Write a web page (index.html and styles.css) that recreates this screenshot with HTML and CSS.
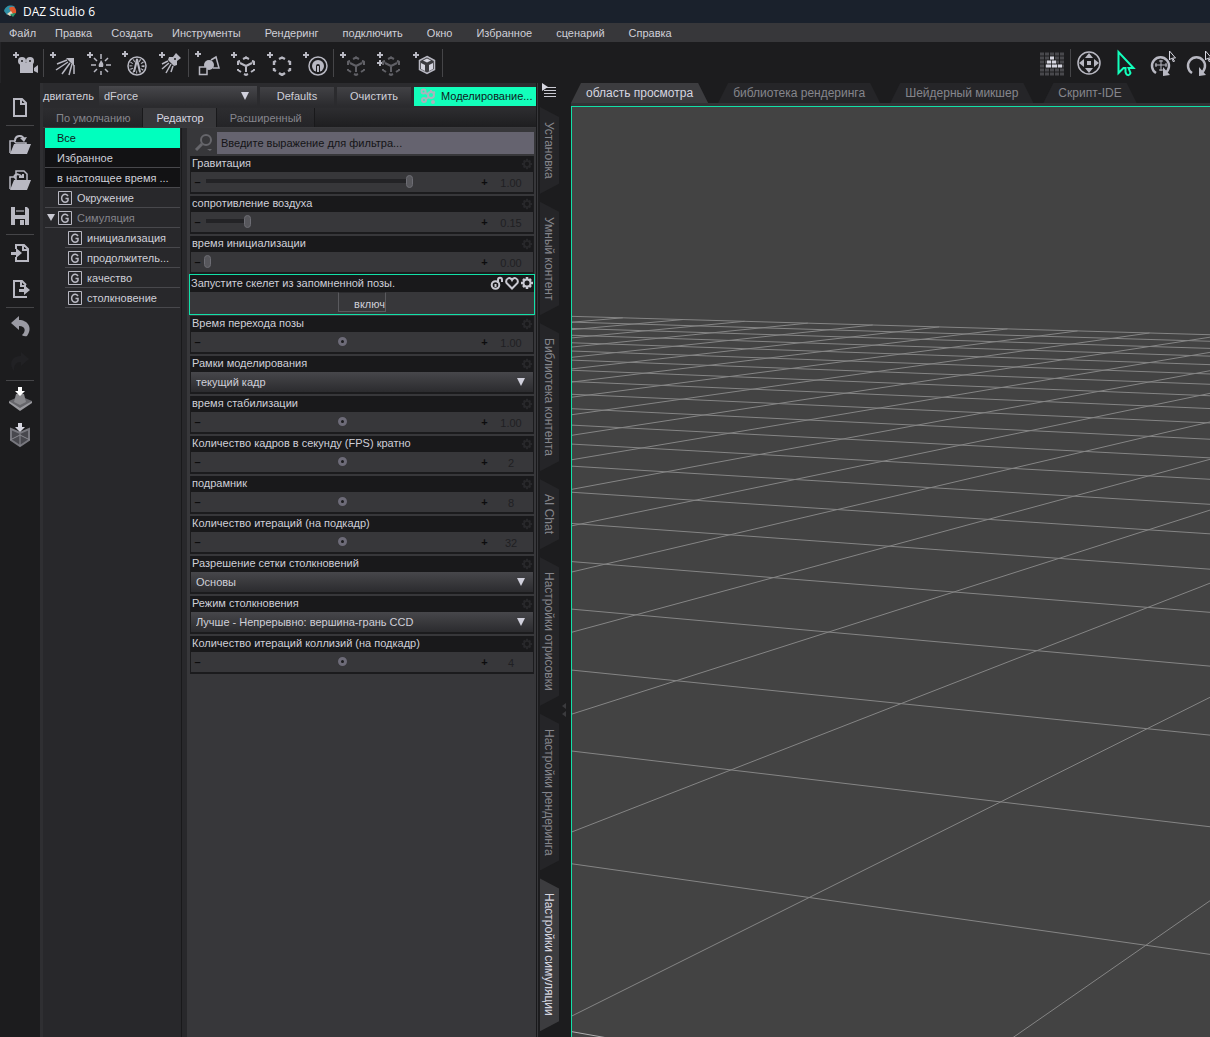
FILE: index.html
```html
<!DOCTYPE html>
<html lang="ru">
  <head>
    <meta charset="UTF-8" />
    <meta name="viewport" content="width=device-width, initial-scale=1.0" />
    <title>DAZ Studio 6</title>
    <link rel="stylesheet" href="styles.css">
  </head>
  <body>
    <!-- shared icon parts -->
    <svg class="sprite" aria-hidden="true">
      <symbol id="plus" viewBox="0 0 8 8"><path d="M3 1h2v2h2v2H5v2H3V5H1V3h2z" fill="currentColor" /></symbol>
      <symbol id="cube" viewBox="0 0 20 20">
        <g fill="none" stroke="currentColor" stroke-width="2">
          <path d="M7 3l3-1.500 3 1.500M2 9V6l2-1M16 5l2 1v3M2 13v1l3 2M18 13v1l-3 2M8 18l2 1 2-1M10 10v6M10 10L4 7M10 10l6-3" />
        </g>
        <path d="M10 0l3 3H7zM1 5l3-1-1 4zM19 5l-3-1 1 4z" fill="currentColor" />
      </symbol>
      <symbol id="dots" viewBox="0 0 20 20">
        <path d="M7 3l3-1.500 3 1.500M2 9V6l2-1M16 5l2 1v3M2 12v2l2 1M18 12v2l-2 1M7 17l3 2 3-2" fill="none" stroke="currentColor" stroke-width="2.400" />
      </symbol>
      <symbol id="gear" viewBox="0 0 14 14">
        <path d="M7 1v12M1 7h12M3 3l8 8M11 3l-8 8" stroke="currentColor" stroke-width="2.500" />
        <circle cx="7" cy="7" r="3.500" fill="#19191b" stroke="currentColor" stroke-width="2" />
      </symbol>
      <symbol id="group" viewBox="0 0 14 14">
        <path d="M.5.5h13v13H.5z" fill="none" stroke="currentColor" />
        <path d="M10 5A3.500 4 0 1 0 10 9.500V7.500H7.500" fill="none" stroke="currentColor" stroke-width="1.500" />
      </symbol>
    </svg>

    <header class="titlebar">
      <svg width="14" height="14" viewBox="0 0 14 14">
        <path d="M1 6C2 1 8-1 12 2l-3 4-5 4z" fill="#2f8fa6" />
        <path d="M6 3c4-3 8 0 7 5l-4 1z" fill="#e2582d" />
        <path d="M4 9l4-3 2 3-3 2z" fill="#e8d9c0" />
        <path d="M7 9l6-1-3 4z" fill="#2a9b6e" />
      </svg>
      <h1>DAZ Studio 6</h1>
    </header>

    <nav class="menubar">
      <a href="#">Файл</a>
      <a href="#">Правка</a>
      <a href="#">Создать</a>
      <a href="#">Инструменты</a>
      <a href="#">Рендеринг</a>
      <a href="#">подключить</a>
      <a href="#">Окно</a>
      <a href="#">Избранное</a>
      <a href="#">сценарий</a>
      <a href="#">Справка</a>
    </nav>

    <div class="toolbar">
      <button class="tool" aria-label="Новая камера">
        <svg viewBox="0 0 36 36">
          <use href="#plus" x="5" y="6" width="8" height="8" />
          <circle cx="15" cy="16" r="4" fill="currentColor" /><circle cx="23" cy="16" r="4" fill="currentColor" />
          <path d="M13 18h13v10H13zM27 23l4-3v8l-4-2z" fill="currentColor" />
          <circle cx="15" cy="16" r="1" fill="#1c1c1e" /><circle cx="23" cy="16" r="1" fill="#1c1c1e" />
        </svg>
      </button>
      <span class="sep"></span>
      <button class="tool" aria-label="Направленный свет">
        <svg viewBox="0 0 36 36">
          <use href="#plus" x="5" y="6" width="8" height="8" />
          <path d="M22 13h8v8z" fill="currentColor" />
          <path d="M23 15l-10 4M24 17l-12 8M26 18l-8 11M28 19l-3 11M30 20v9" stroke="currentColor" stroke-width="1.500" />
        </svg>
      </button>
      <button class="tool" aria-label="Точечный свет">
        <svg viewBox="0 0 36 36">
          <use href="#plus" x="6" y="6" width="8" height="8" />
          <path d="M21 9v5M21 26v4M11 20h5M26 20h5M14 13l3 3M28 13l-3 3M14 27l3-3M28 27l-3-3" stroke="currentColor" stroke-width="1.500" />
          <path d="M21 15c2 3 3 4 2 7h-4c-1-3 1-4 2-7z" fill="currentColor" />
        </svg>
      </button>
      <button class="tool" aria-label="Линейный свет">
        <svg viewBox="0 0 36 36">
          <use href="#plus" x="5" y="5" width="8" height="8" />
          <circle cx="21" cy="21" r="9" fill="none" stroke="currentColor" stroke-width="1.500" />
          <circle cx="21" cy="21" r="6" fill="none" stroke="currentColor" stroke-width="3" stroke-dasharray="1 2" />
          <path d="M20 14h2l3 13h-2l-2-8-2 8h-2zM19 22h4" fill="currentColor" />
        </svg>
      </button>
      <button class="tool" aria-label="Прожектор">
        <svg viewBox="0 0 36 36">
          <use href="#plus" x="6" y="6" width="8" height="8" />
          <path d="M24 8l5 5-4 3v4l-3 1-6-6 1-3h4z" fill="currentColor" /><circle cx="23" cy="14" r="1" fill="#1c1c1e" />
          <path d="M16 16l-6 3M17 18l-7 6M19 19l-5 9M21 21l-2 6" stroke="currentColor" stroke-width="1.500" />
        </svg>
      </button>
      <span class="sep"></span>
      <button class="tool" aria-label="Примитив">
        <svg viewBox="0 0 36 36">
          <use href="#plus" x="5" y="5" width="8" height="8" />
          <path d="M22 15l5-3 3 11h-6" fill="none" stroke="currentColor" stroke-width="1.500" />
          <circle cx="20" cy="20" r="5" fill="currentColor" />
          <path d="M10.500 22h7.500v7.500h-7.500z" fill="#1c1c1e" stroke="currentColor" stroke-width="1.500" />
        </svg>
      </button>
      <button class="tool" aria-label="Нулевой узел">
        <svg viewBox="0 0 36 36"><use href="#plus" x="5" y="6" width="8" height="8" /><use href="#cube" x="11" y="11" width="20" height="20" /></svg>
      </button>
      <button class="tool" aria-label="Группа">
        <svg viewBox="0 0 36 36"><use href="#plus" x="5" y="6" width="8" height="8" /><use href="#dots" x="11" y="11" width="20" height="20" /></svg>
      </button>
      <button class="tool" aria-label="Экземпляр">
        <svg viewBox="0 0 36 36">
          <use href="#plus" x="5" y="6" width="8" height="8" />
          <circle cx="21" cy="21" r="9" fill="none" stroke="currentColor" stroke-width="1.500" />
          <circle cx="21" cy="21" r="6" fill="currentColor" />
          <path d="M19 27v-6a2 2 0 1 1 4 0v6z" fill="#1c1c1e" /><path d="M20 21h2v6h-2z" fill="currentColor" />
        </svg>
      </button>
      <span class="sep"></span>
      <button class="tool" aria-label="Новый узел">
        <svg viewBox="0 0 36 36"><use href="#plus" x="5" y="6" width="8" height="8" /><use class="dim" href="#cube" x="12" y="11" width="20" height="20" /></svg>
      </button>
      <button class="tool" aria-label="Новые узлы">
        <svg viewBox="0 0 36 36"><use href="#plus" x="6" y="6" width="8" height="8" /><use href="#plus" x="6" y="14" width="8" height="8" /><use class="dim" href="#cube" x="11" y="11" width="20" height="20" /></svg>
      </button>
      <button class="tool" aria-label="Геометрия">
        <svg viewBox="0 0 36 36">
          <use href="#plus" x="6" y="6" width="8" height="8" />
          <path d="M21 11.500l7.500 4v9l-7.500 4-7.500-4v-9z" fill="#3c3c40" stroke="currentColor" stroke-width="1.500" />
          <path d="M17 15.500l4-2 4 2-4 2zM15 18l4 2v6l-4-2zM27 18l-4 2v6l4-2z" fill="#d6d6e0" />
        </svg>
      </button>
      <span class="sep"></span>

      <div class="view-tools">
        <button class="tool" aria-label="Стиль отображения">
          <svg viewBox="0 0 36 36">
            <path d="M6 9h24M6 13h24M6 17h24M6 21h24M6 25h24M6 29h24" stroke="#48484c" stroke-width="3" stroke-dasharray="4 1" />
            <path d="M16 13h4M13 17h4M18 17h4M12 21h5M18 21h5M24 21h4" stroke="#d6d6e0" stroke-width="3" />
          </svg>
        </button>
        <span class="sep"></span>
        <button class="tool" aria-label="Универсальный инструмент">
          <svg viewBox="0 0 36 36">
            <circle cx="18" cy="18" r="11" fill="none" stroke="currentColor" stroke-width="1.500" />
            <path d="M18 8l4 5h-8zM18 28l4-5h-8zM8 18l5-4v8zM28 18l-5-4v8zM16 16h4v4h-4z" fill="currentColor" />
          </svg>
        </button>
        <button class="tool active" aria-label="Выбор узла">
          <svg viewBox="0 0 36 36">
            <path d="M11.500 7v21l5-5h2v4c1 4 4 4 5 1l-2-5h5z" fill="none" stroke="currentColor" stroke-width="2" />
          </svg>
        </button>
        <button class="tool" aria-label="Вращение и перемещение">
          <svg viewBox="0 0 36 36">
            <path d="M13 28a8.500 8.500 0 1 1 9 0" fill="none" stroke="currentColor" stroke-width="2.500" />
            <path d="M20 22v9l7-1z" fill="currentColor" />
            <path d="M18 15v11M12 20h12M16 16h4M16 25h4M13 18v4M23 18v4" stroke="currentColor" />
            <path d="M26.500 6v9l2-2 2 4 1-1-2-3h3z" fill="#1c1c1e" stroke="#d6d6e0" />
          </svg>
        </button>
        <button class="tool" aria-label="Вращение">
          <svg viewBox="0 0 36 36">
            <path d="M13 28a8.500 8.500 0 1 1 9 0" fill="none" stroke="currentColor" stroke-width="2.500" />
            <path d="M20 22v9l7-1z" fill="currentColor" />
            <path d="M26.500 6v9l2-2 2 4 1-1-2-3h3z" fill="#1c1c1e" stroke="#d6d6e0" />
          </svg>
        </button>
      </div>
    </div>

    <main class="workspace">
      <div class="file-tools">
        <button class="tool" aria-label="Новый">
          <svg viewBox="0 0 36 36"><path d="M12 10h8l4 4v13H12zM19 10v5h5" fill="none" stroke="currentColor" stroke-width="2" /></svg>
        </button>
        <span class="rule"></span>
        <button class="tool" aria-label="Открыть">
          <svg viewBox="0 0 36 36">
            <path d="M8 27V15h4l2 2h10v4" fill="none" stroke="currentColor" stroke-width="1.500" />
            <path d="M12 18h17l-4 10H8z" fill="currentColor" /><path d="M13 15c0-6 8-7 9-1" fill="none" stroke="currentColor" stroke-width="2" /><path d="M18 12l7-1-3 5z" fill="currentColor" />
          </svg>
        </button>
        <button class="tool" aria-label="Объединить">
          <svg viewBox="0 0 36 36">
            <path d="M8 27V15h4l2 2M14 20V9h8l3 3v8" fill="none" stroke="currentColor" stroke-width="1.500" />
            <path d="M12 18h17l-4 10H8z" fill="currentColor" /><path d="M12 15c2-4 6-3 8 0M17 15h4v-3" fill="none" stroke="currentColor" stroke-width="2" />
          </svg>
        </button>
        <button class="tool" aria-label="Сохранить">
          <svg viewBox="0 0 36 36"><path d="M9 9h16l2 2v16H9z" fill="currentColor" /><path d="M13 9h10v8H13zM13 21h10v6H13z" fill="#1c1c1e" /><path d="M14 13h8" stroke="#77777e" stroke-width="2" /><path d="M18 22h4v5h-4z" fill="currentColor" /></svg>
        </button>
        <span class="rule"></span>
        <button class="tool" aria-label="Импорт">
          <svg viewBox="0 0 36 36"><path d="M14 14v-4h8l4 4v12H14v-4M21 10v5h5" fill="none" stroke="currentColor" stroke-width="2" /><path d="M9 17h5v-4l6 5-6 5v-3H9z" fill="currentColor" /></svg>
        </button>
        <button class="tool" aria-label="Экспорт">
          <svg viewBox="0 0 36 36"><path d="M24 14l-4-4h-8v16h12v-1M19 10v5h5" fill="none" stroke="currentColor" stroke-width="2" /><path d="M17 18h5v-4l6 5-6 5v-3h-5z" fill="currentColor" /></svg>
        </button>
        <span class="rule"></span>
        <button class="tool" aria-label="Отменить">
          <svg viewBox="0 0 36 36"><path d="M9 15l8-7v4c9 0 14 8 8 16-3 1-5-1-5-1 4-3 4-9-3-9v4z" fill="#9a9aa3" /></svg>
        </button>
        <button class="tool" aria-label="Повторить" disabled>
          <svg viewBox="0 0 36 36"><path d="M27 15l-8-7v4c-9 0-13 7-7 15 0-6 2-9 7-9v4z" fill="#212124" /></svg>
        </button>
        <span class="rule"></span>
        <button class="tool" aria-label="На пол">
          <svg viewBox="0 0 36 36"><path d="M7 20l11-5 12 5-12 9z" fill="#66666b" /><path d="M7 20l11 7 12-7v2l-12 8-11-8z" fill="#99999e" /><path d="M14 13h8l2 8-6 3-6-3z" fill="#88888c" /><path d="M16 6h4v4h3l-5 5-5-5h3z" fill="#fff" /></svg>
        </button>
        <button class="tool" aria-label="В сцену">
          <svg viewBox="0 0 36 36"><path d="M9 12l9 4 9-4v11l-9 6-9-6z" fill="#48484e" stroke="#77777e" stroke-width="2" /><path d="M18 17v12M8 23l10-5 10 5" stroke="#88888f" fill="none" /><path d="M16 6h4v4h3l-5 5-5-5h3z" fill="#d6d6e0" /></svg>
        </button>
      </div>

      <section class="panel">
        <div class="engine-row">
          <label for="engine">двигатель</label>
          <div class="dropdown engine">
            <select id="engine"><option>dForce</option></select>
          </div>
          <button class="defaults">Defaults</button>
          <button class="clear">Очистить</button>
          <button class="simulate">
            <svg width="16" height="16" viewBox="0 0 16 16" fill="none" stroke="#a9b4bc" stroke-width="2">
              <circle cx="3.500" cy="3.500" r="2" /><circle cx="11" cy="7" r="3" /><circle cx="4" cy="12" r="2" /><circle cx="13" cy="14" r="1" />
              <path d="M5 5l3 1M6 11l3-2M11 2v2M15 4l-2 1" />
            </svg>
            Моделирование...
          </button>
        </div>

        <div class="mode-tabs">
          <button>По умолчанию</button>
          <button class="active">Редактор</button>
          <button>Расширенный</button>
        </div>

        <div class="panel-body">
          <ul class="tree">
            <li class="flat selected"><button>Все</button></li>
            <li class="flat"><button>Избранное</button></li>
            <li class="flat"><button>в настоящее время ...</button></li>
            <li><button><svg><use href="#group" /></svg>Окружение</button></li>
            <li class="open"><button><svg><use href="#group" /></svg>Симуляция</button></li>
            <li class="child"><button><svg><use href="#group" /></svg>инициализация</button></li>
            <li class="child"><button><svg><use href="#group" /></svg>продолжитель...</button></li>
            <li class="child"><button><svg><use href="#group" /></svg>качество</button></li>
            <li class="child"><button><svg><use href="#group" /></svg>столкновение</button></li>
          </ul>

          <div class="properties">
            <div class="filter">
              <svg width="20" height="20" viewBox="0 0 20 20" fill="none" stroke="#66666b">
                <circle cx="12" cy="7" r="5" stroke-width="2" /><path d="M8 11l-6 6" stroke-width="3" /><path d="M13 16h5l-2 2z" fill="#66666b" stroke="none" />
              </svg>
              <input type="text" aria-label="Фильтр" placeholder="Введите выражение для фильтра..." />
            </div>

            <div class="property">
              <div class="head"><label for="gravity">Гравитация</label><svg class="cog"><use href="#gear" /></svg></div>
              <div class="slider">
                <button aria-label="Меньше">–</button>
                <input type="range" id="gravity" value="75" style="--fill: 75%" />
                <button aria-label="Больше">+</button>
                <input type="text" class="value" aria-label="Гравитация" value="1.00" />
              </div>
            </div>

            <div class="property">
              <div class="head"><label for="air">сопротивление воздуха</label><svg class="cog"><use href="#gear" /></svg></div>
              <div class="slider">
                <button aria-label="Меньше">–</button>
                <input type="range" id="air" value="15" style="--fill: 15%" />
                <button aria-label="Больше">+</button>
                <input type="text" class="value" aria-label="сопротивление воздуха" value="0.15" />
              </div>
            </div>

            <div class="property">
              <div class="head"><label for="start">время инициализации</label><svg class="cog"><use href="#gear" /></svg></div>
              <div class="slider">
                <button aria-label="Меньше">–</button>
                <input type="range" id="start" value="0" style="--fill: 0%" />
                <button aria-label="Больше">+</button>
                <input type="text" class="value" aria-label="время инициализации" value="0.00" />
              </div>
            </div>

            <div class="property current">
              <div class="head">
                <label for="pose">Запустите скелет из запомненной позы.</label>
                <svg class="state" viewBox="0 0 14 14" fill="none" stroke="currentColor" stroke-width="2"><circle cx="5.500" cy="9" r="3.800" /><path d="M8 7V4c0-3 4-3 4 0v2M5.500 8v3" /></svg>
                <svg class="state" viewBox="0 0 14 14" fill="none" stroke="currentColor" stroke-width="2"><path d="M7 12.500L1.500 7C0 3 5 0 7 4c2-4 7-1 5.500 3z" /></svg>
                <svg class="state"><use href="#gear" /></svg>
              </div>
              <div class="toggle"><button id="pose">включ</button></div>
            </div>

            <div class="property">
              <div class="head"><label for="transition">Время перехода позы</label><svg class="cog"><use href="#gear" /></svg></div>
              <div class="slider free">
                <button aria-label="Меньше">–</button>
                <input type="range" id="transition" value="50" />
                <button aria-label="Больше">+</button>
                <input type="text" class="value" aria-label="Время перехода позы" value="1.00" />
              </div>
            </div>

            <div class="property">
              <div class="head"><label for="frames">Рамки моделирования</label><svg class="cog"><use href="#gear" /></svg></div>
              <div class="dropdown"><select id="frames"><option>текущий кадр</option></select></div>
            </div>

            <div class="property">
              <div class="head"><label for="stabilize">время стабилизации</label><svg class="cog"><use href="#gear" /></svg></div>
              <div class="slider free">
                <button aria-label="Меньше">–</button>
                <input type="range" id="stabilize" value="50" />
                <button aria-label="Больше">+</button>
                <input type="text" class="value" aria-label="время стабилизации" value="1.00" />
              </div>
            </div>

            <div class="property">
              <div class="head"><label for="fps">Количество кадров в секунду (FPS) кратно</label><svg class="cog"><use href="#gear" /></svg></div>
              <div class="slider free">
                <button aria-label="Меньше">–</button>
                <input type="range" id="fps" value="50" />
                <button aria-label="Больше">+</button>
                <input type="text" class="value" aria-label="Количество кадров" value="2" />
              </div>
            </div>

            <div class="property">
              <div class="head"><label for="subframes">подрамник</label><svg class="cog"><use href="#gear" /></svg></div>
              <div class="slider free">
                <button aria-label="Меньше">–</button>
                <input type="range" id="subframes" value="50" />
                <button aria-label="Больше">+</button>
                <input type="text" class="value" aria-label="подрамник" value="8" />
              </div>
            </div>

            <div class="property">
              <div class="head"><label for="iterations">Количество итераций (на подкадр)</label><svg class="cog"><use href="#gear" /></svg></div>
              <div class="slider free">
                <button aria-label="Меньше">–</button>
                <input type="range" id="iterations" value="50" />
                <button aria-label="Больше">+</button>
                <input type="text" class="value" aria-label="Количество итераций" value="32" />
              </div>
            </div>

            <div class="property">
              <div class="head"><label for="mesh">Разрешение сетки столкновений</label><svg class="cog"><use href="#gear" /></svg></div>
              <div class="dropdown"><select id="mesh"><option>Основы</option></select></div>
            </div>

            <div class="property">
              <div class="head"><label for="mode">Режим столкновения</label><svg class="cog"><use href="#gear" /></svg></div>
              <div class="dropdown"><select id="mode"><option>Лучше - Непрерывно: вершина-грань CCD</option></select></div>
            </div>

            <div class="property">
              <div class="head"><label for="collisions">Количество итераций коллизий (на подкадр)</label><svg class="cog"><use href="#gear" /></svg></div>
              <div class="slider free">
                <button aria-label="Меньше">–</button>
                <input type="range" id="collisions" value="50" />
                <button aria-label="Больше">+</button>
                <input type="text" class="value" aria-label="Количество итераций коллизий" value="4" />
              </div>
            </div>
          </div>
        </div>
      </section>

      <nav class="side-tabs">
        <button class="pane-menu" aria-label="Меню панели">
          <svg width="16" height="16" viewBox="0 0 16 16"><path d="M3 4.500h12M3 7.500h12M3 10.500h12M3 13.500h12" stroke="#c9c9d2" /><path d="M1 0l6 4-6 4z" fill="#d6d6e0" /></svg>
        </button>
        <button class="tab">Установка</button>
        <button class="tab">Умный контент</button>
        <button class="tab">Библиотека контента</button>
        <button class="tab">AI Chat</button>
        <button class="tab">Настройки отрисовки</button>
        <button class="tab">Настройки рендеринга</button>
        <button class="tab active">Настройки симуляции</button>
      </nav>

      <div class="splitter"><svg width="6" height="16" viewBox="0 0 6 16"><path d="M5 1v6L1 4zM5 9v6l-4-3z" fill="#3a3a3d" /></svg></div>

      <section class="stage">
        <div class="stage-tabs">
          <button class="tab active">область просмотра</button>
          <button class="tab">библиотека рендеринга</button>
          <button class="tab">Шейдерный микшер</button>
          <button class="tab">Скрипт-IDE</button>
        </div>
        <div class="viewport">
          <svg id="floor"></svg>
        </div>
      </section>
    </main>

    <script src="script.js"></script>
  </body>
</html>
```

FILE: styles.css
```css
* {
  box-sizing: border-box;
}

body {
  display: flex;
  flex-direction: column;
  height: 100vh;
  margin: 0;
  overflow: hidden;
  background: #1c1c1e;
  color: #cfcfd8;
  font: 11px/16px "Liberation Sans", Arial, sans-serif;
}

button,
input,
select {
  margin: 0;
  padding: 0;
  border: 0;
  border-radius: 0;
  background: none;
  color: inherit;
  font: inherit;
}

.sprite {
  display: none;
}

/* window title and menu */
.titlebar {
  display: flex;
  align-items: center;
  gap: 6px;
  height: 23px;
  padding-left: 3px;
  background: #1a212c;
}

.titlebar h1 {
  margin: 0;
  color: #fff;
  font: 12px/20px "Open Sans", sans-serif;
}

.menubar {
  display: flex;
  gap: 19px;
  height: 19px;
  padding-left: 9px;
  background: #37373a;
  line-height: 20px;
}

.menubar a {
  color: inherit;
  text-decoration: none;
  white-space: nowrap;
}

.menubar a:nth-child(n + 5) {
  margin-left: 5px;
}

/* toolbars */
.toolbar {
  display: flex;
  align-items: center;
  height: 41px;
  padding-left: 6px;
  border-left: 1px solid #242427;
}

.tool {
  flex: none;
  width: 36px;
  height: 36px;
  color: #b8b8c2;
}

.tool svg {
  display: block;
  width: 36px;
  height: 36px;
}

.tool.active {
  color: #12ffbb;
}

.dim {
  color: #606066;
}

.sep {
  width: 1px;
  height: 28px;
  background: #454548;
}

.view-tools {
  display: flex;
  align-items: center;
  margin-left: auto;
  margin-right: -5px;
}

.workspace {
  display: flex;
  flex: 1;
  min-height: 0;
}

.file-tools {
  display: flex;
  flex-direction: column;
  align-items: center;
  width: 43px;
  padding: 6px 1px 0 0;
  border-right: 3px solid #2f2f32;
}

.rule {
  flex: none;
  width: 28px;
  height: 1px;
  background: #454548;
}

/* simulation settings */
.panel {
  display: flex;
  flex-direction: column;
  width: 494px;
  border-right: 1px solid #19191b;
  background: #28282b;
}

.engine-row {
  display: flex;
  align-items: center;
  gap: 3px;
  height: 25px;
  padding-top: 1px;
  background: #2b2b2e;
}

.engine-row label {
  width: 53px;
}

.engine-row button {
  height: 19px;
  background: linear-gradient(#414145, #2b2b2e);
}

.dropdown {
  position: relative;
  background: linear-gradient(#47474b, #2b2b2e);
}

.dropdown::after {
  content: "";
  position: absolute;
  top: 6px;
  right: 8px;
  width: 8px;
  height: 8px;
  background: #d0d0dc;
  clip-path: polygon(0 0, 100% 0, 50% 100%);
  pointer-events: none;
}

.dropdown select {
  display: block;
  width: 100%;
  height: 20px;
  padding-left: 5px;
  appearance: none;
}

.dropdown option {
  background: #2b2b2e;
}

.engine {
  flex: 1;
}

.defaults,
.clear {
  width: 74px;
}

.engine-row .simulate {
  display: flex;
  align-items: center;
  gap: 5px;
  width: 122px;
  padding-left: 6px;
  background: #12ffbb;
  color: #10201c;
  white-space: nowrap;
}

.mode-tabs {
  display: flex;
  height: 19px;
  background: linear-gradient(#2d2d30, #1e1e20);
}

.mode-tabs button {
  padding: 0 12px 0 13px;
  border-right: 1px solid #19191b;
  background: linear-gradient(#2d2d30, #242427);
  color: #85858c;
}

.mode-tabs .active {
  background: #38383b;
  color: #d6d6e0;
}

.panel-body {
  display: flex;
  flex: 1;
  min-height: 0;
  border-top: 1px solid #3a3a3d;
}

.tree {
  width: 139px;
  margin: 0;
  padding: 0 1px 0 2px;
  border-right: 1px solid #19191b;
  list-style: none;
}

.tree li {
  height: 20px;
  border-bottom: 1px solid #48484c;
}

.tree button {
  display: flex;
  align-items: center;
  gap: 5px;
  width: 100%;
  height: 19px;
  padding-left: 13px;
  text-align: left;
  white-space: nowrap;
}

.tree svg {
  width: 14px;
  height: 14px;
  color: #b8b8c2;
}

.tree .flat {
  background: #121214;
}

.tree .flat button {
  padding-left: 12px;
}

.tree .selected {
  border-color: #00ffbe;
  background: #00ffbe;
  color: #10201c;
}

.tree .open button {
  padding-left: 2px;
  color: #85858c;
}

.tree .open button::before {
  content: "";
  width: 8px;
  height: 7px;
  margin-right: -2px;
  background: #c9c9d2;
  clip-path: polygon(0 0, 100% 0, 50% 100%);
}

.tree .child {
  margin-left: 20px;
}

.tree .child button {
  padding-left: 3px;
}

.properties {
  flex: 1;
  margin-left: 5px;
  padding: 2px 2px 0 3px;
  background: #37373a;
}

.filter {
  display: flex;
  align-items: center;
  height: 25px;
  margin-bottom: 1px;
}

.filter svg {
  margin: 0 3px 0 4px;
}

.filter input {
  flex: 1;
  height: 22px;
  padding-left: 4px;
  background: #65636f;
  color: #141416;
}

.filter input::placeholder {
  color: #141416;
  opacity: 1;
}

.property {
  height: 38px;
  margin-bottom: 2px;
  border: 1px solid #1b1b1d;
  border-bottom-width: 2px;
  border-top: 0;
  background: #37373a;
}

.head {
  display: flex;
  height: 16px;
  padding-left: 1px;
  background: #19191b;
  line-height: 14px;
}

.head label {
  flex: 1;
}

.cog {
  width: 12px;
  height: 12px;
  margin-top: 2px;
  color: #28282b;
}

.state {
  width: 14px;
  height: 14px;
  margin: 1px 0 0 1px;
  color: #c9c9d2;
}

.property.current {
  height: 41px;
  margin: -2px -1px 1px;
  border: 1px solid #12e0a8;
}

.current .head {
  height: 17px;
  line-height: 16px;
}

.slider {
  display: flex;
  align-items: center;
  height: 20px;
}

.slider button {
  width: 9px;
  height: 20px;
  color: #0c0c0d;
  font-weight: bold;
  line-height: 16px;
}

.slider button:first-child {
  width: 13px;
}

.slider input[type="range"] {
  flex: 1;
  min-width: 0;
  height: 18px;
  margin-bottom: 2px;
  background: linear-gradient(#232326, #232326) 2px 50% / var(--fill, 0) 4px no-repeat;
  appearance: none;
}

.slider input::-webkit-slider-thumb {
  width: 7px;
  height: 13px;
  border: 1px solid #6d6d74;
  border-radius: 4px;
  background: #57575c;
  appearance: none;
}

.free input::-webkit-slider-thumb {
  width: 9px;
  height: 9px;
  border: 3px solid #6d6b78;
  border-radius: 50%;
  background: #1c1c1e;
}

.slider .value {
  width: 44px;
  padding-top: 2px;
  color: #202023;
  text-align: center;
}

.toggle {
  display: flex;
  justify-content: center;
}

.toggle button {
  height: 20px;
  padding: 4px 0 0 15px;
  border: 1px solid #5a5a5e;
  border-top-color: #2b2b2e;
  line-height: 14px;
}

/* vertical pane tabs */
.side-tabs {
  display: flex;
  flex-direction: column;
  gap: 8px;
  width: 24px;
  padding-left: 2px;
  border-left: 1px solid #37373a;
}

.pane-menu {
  width: 18px;
  height: 16px;
}

.tab {
  flex: none;
  background: #252528;
  color: #85858c;
  font-size: 12px;
  white-space: nowrap;
}

.tab.active {
  background: #3c3c3f;
  color: #d6d6e0;
}

.side-tabs .tab {
  width: 19px;
  padding: 15px 2px 15px 0;
  clip-path: polygon(0 0, 100% 10px, 100% calc(100% - 10px), 0 100%);
  writing-mode: vertical-rl;
}

.splitter {
  display: flex;
  align-items: center;
  width: 10px;
  padding-top: 300px;
}

.stage {
  display: flex;
  flex: 1;
  flex-direction: column;
  min-width: 0;
}

.stage-tabs {
  display: flex;
  gap: 10px;
  height: 23px;
  border-bottom: 3px solid #323235;
}

.stage-tabs .tab {
  padding: 0 15px;
  clip-path: polygon(10px 0, calc(100% - 10px) 0, 100% 100%, 0 100%);
}

.viewport {
  flex: 1;
  min-height: 0;
  border: solid #12e0a8;
  border-width: 1px 0 0 1px;
  background: #434343;
}

.viewport svg {
  display: block;
  width: 100%;
  height: 100%;
}

.viewport line {
  stroke: #858585;
}

.viewport .axis {
  stroke: #b0b0b0;
}
```

FILE: script.js
```js
// floor grid in perspective, both line families meet on the horizon
const floor = document.getElementById("floor");
const horizon = 70;
const leftVanish = 4838;
const rightVanish = 1680;

function addLine(x1, y1, x2, y2, name) {
  const line = document.createElementNS("http://www.w3.org/2000/svg", "line");
  line.setAttribute("x1", x1);
  line.setAttribute("y1", y1);
  line.setAttribute("x2", x2);
  line.setAttribute("y2", y2);
  if (name) line.setAttribute("class", name);
  floor.appendChild(line);
}

let farDepth = 0;
for (let i = 0; i <= 21; i++) {
  const depth = 1 / (0.00117 + 0.000286 * i);
  addLine(0, horizon + depth, 1600, horizon + depth + (depth / leftVanish) * 1600, i === 0 ? "axis" : "");
  farDepth = depth;
}

for (let i = 0; i <= 40; i++) {
  const depth = 1 / (0.000857 + 0.000335 * i);
  if (depth <= farDepth) break;
  // stop at the far edge of the grid
  const x = (depth - farDepth) / (farDepth / leftVanish + depth / rightVanish);
  addLine(0, horizon + depth, x, horizon + depth - (depth / rightVanish) * x);
}
```
